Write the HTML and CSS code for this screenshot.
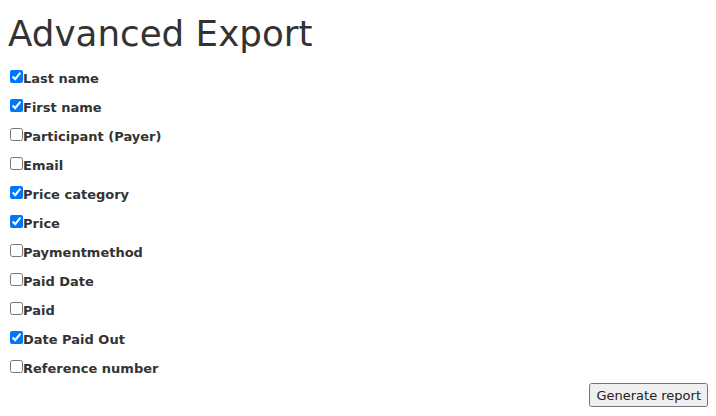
FILE: index.html
```html
<!DOCTYPE html>
<html>
<head>
<meta charset="utf-8">
<link rel="stylesheet" href="styles.css">
</head>
<body>
<h1 class="title">Advanced Export</h1>
<form class="export">
  <div class="fields">
    <label class="field"><input type="checkbox" checked>Last name</label>
    <label class="field"><input type="checkbox" checked>First name</label>
    <label class="field"><input type="checkbox">Participant (Payer)</label>
    <label class="field"><input type="checkbox">Email</label>
    <label class="field"><input type="checkbox" checked>Price category</label>
    <label class="field"><input type="checkbox" checked>Price</label>
    <label class="field"><input type="checkbox">Paymentmethod</label>
    <label class="field"><input type="checkbox">Paid Date</label>
    <label class="field"><input type="checkbox">Paid</label>
    <label class="field"><input type="checkbox" checked>Date Paid Out</label>
    <label class="field"><input type="checkbox">Reference number</label>
  </div>
  <div class="actions">
    <button type="button" class="btn">Generate report</button>
  </div>
</form>
</body>
</html>
```
FILE: styles.css
```css
html, body {
  margin: 0;
  padding: 0;
  background: #fff;
}
body {
  padding: 0 8px;
  font-family: "DejaVu Sans", Verdana, sans-serif;
  color: #333;
}
.title {
  margin: 12px 0 0 0;
  font-size: 35.7px;
  font-weight: normal;
  line-height: 44px;
  color: #333;
}
.export {
  display: flex;
  flex-direction: column;
}
.fields {
  display: flex;
  flex-direction: column;
  margin-top: 8px;
}
.field {
  display: flex;
  align-items: center;
  height: 29px;
  font-size: 13px;
  font-weight: bold;
  color: #333;
}
.field input {
  margin: 0 0 4px 2px;
  width: 13px;
  height: 13px;
}
.actions {
  display: flex;
  justify-content: flex-end;
}
.btn {
  font-family: "DejaVu Sans", Verdana, sans-serif;
  font-size: 13px;
  color: #222;
  padding: 2px 5px;
  height: 24px;
}
```
